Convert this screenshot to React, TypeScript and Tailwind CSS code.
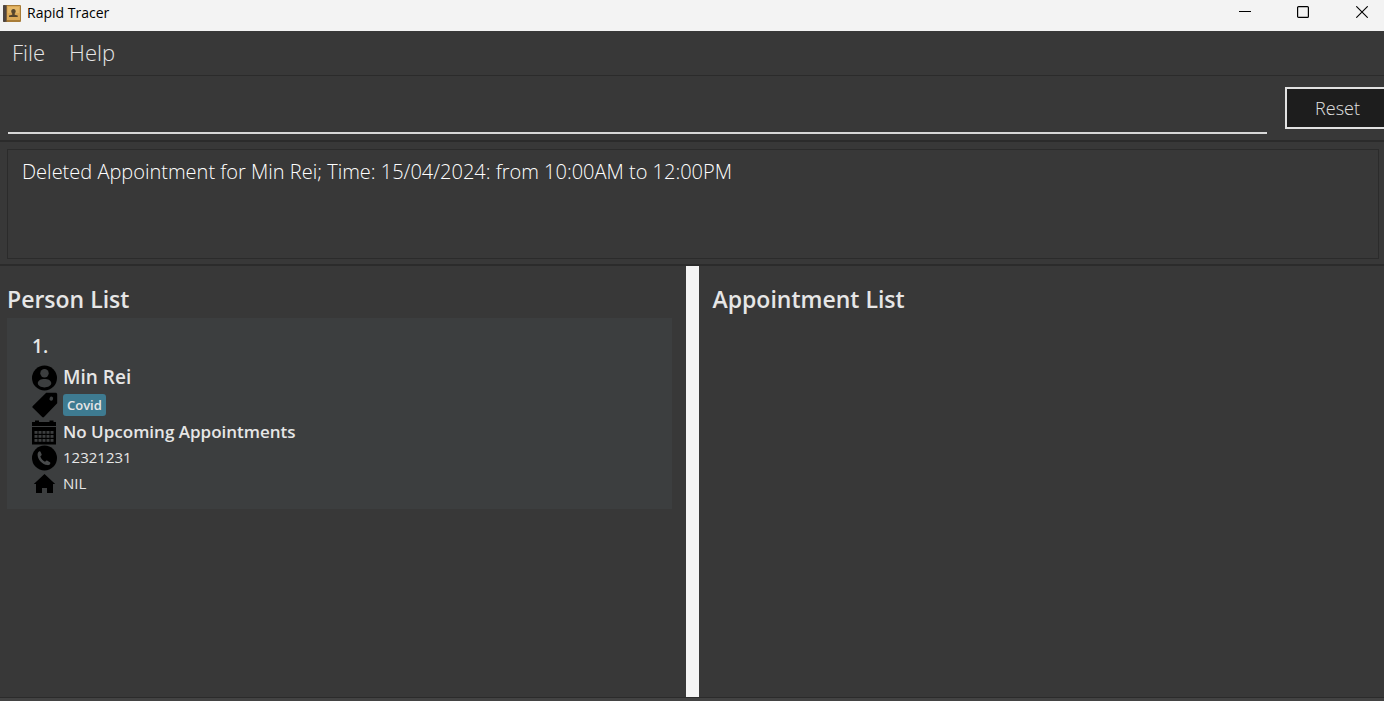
import type { ReactNode } from "react";

type Person = {
  name: string;
  tags: string[];
  appointments: string;
  phone: string;
  address: string;
};

const people: Person[] = [
  {
    name: "Min Rei",
    tags: ["Covid"],
    appointments: "No Upcoming Appointments",
    phone: "12321231",
    address: "NIL",
  },
];

function AppIcon() {
  return (
    <svg width="18" height="17" viewBox="0 0 18 17" aria-hidden="true">
      <rect x="0" y="0" width="18" height="17" rx="1" fill="#a87c38" />
      <rect x="4" y="1" width="13" height="14" fill="#dba957" />
      <rect x="5" y="2" width="11" height="6" fill="#e5b868" />
      <rect x="0" y="0" width="3" height="17" rx="1" fill="#4c4441" />
      <rect x="3" y="0" width="1" height="17" fill="#7d603b" />
      <path d="M10.500 4c1.500 0 2.200 1 2.200 2.300 0 1-.5 1.700-1 2.200v1.200l3 .9V12H6v-1.400l3.200-.9V8.500c-.6-.5-1-1.200-1-2.200C8.200 5 9 4 10.500 4z" fill="#57462d" />
    </svg>
  );
}

function UserIcon() {
  return (
    <svg width="26" height="26" viewBox="0 0 26 26" aria-hidden="true">
      <circle cx="12.500" cy="13" r="12.500" fill="#000" />
      <circle cx="12.500" cy="8.300" r="4.200" fill="#3c3e3f" />
      <path d="M5.800 18.300c0-2.900 3.200-4.300 6.700-4.300s6.800 1.400 6.800 4.300c0 2.300-3.500 4.200-6.800 4.200s-6.700-1.900-6.700-4.200z" fill="#3c3e3f" />
    </svg>
  );
}

function TagIcon() {
  return (
    <svg width="26" height="26" viewBox="0 0 26 26" aria-hidden="true">
      <path d="M14.200.7h9.300c1 0 1.700.7 1.700 1.700v8.800L12 25c-.6.600-1.200.6-1.800 0L.8 15.800c-.6-.6-.6-1.300 0-1.900z" fill="#000" />
      <ellipse cx="19.300" cy="6.700" rx="1.800" ry="2.100" transform="rotate(25 19.300 6.700)" fill="#3c3e3f" />
    </svg>
  );
}

function CalendarIcon() {
  const columns = [2.5, 6.5, 10.5, 14.5, 18.5];
  const rows = [12, 16, 20];
  return (
    <svg width="26" height="26" viewBox="0 0 26 26" aria-hidden="true">
      <path d="M0 3h3V1.500h4V3h10.500V1.500h4V3H24v4H0zM0 8h24v17.500H0z" fill="#000" />
      {rows.map((y) =>
        columns.map((x) => (
          <rect key={`${x}-${y}`} x={x} y={y} width="3" height="2.800" fill="#3c3e3f" />
        )),
      )}
    </svg>
  );
}

function PhoneIcon() {
  return (
    <svg width="26" height="26" viewBox="0 0 26 26" aria-hidden="true">
      <circle cx="12.500" cy="13" r="12.500" fill="#000" />
      <path d="M7.500 6.300c.4-.2.800 0 1 .5l1.100 2.400c.2.500.1.900-.3 1.200l-1 .9c.7 2.300 2.400 4.200 4.700 5.500l1.200-1c.4-.3.800-.3 1.200 0l2.500 1.400c.5.300.6.700.4 1.200-.4 1.200-1.500 1.900-2.900 1.700-5.200-.7-9.800-5.800-9.800-10.400 0-1.500.6-2.800 1.900-3.400z" fill="#484a4b" />
    </svg>
  );
}

function HomeIcon() {
  return (
    <svg width="26" height="26" viewBox="0 0 26 26" aria-hidden="true">
      <path d="M12.500 3L23.200 13H21v9h-6v-5h-5v5H4v-9H1.800z" fill="#000" />
    </svg>
  );
}

function Row({ icon, tall = false, children }: { icon: ReactNode; tall?: boolean; children: ReactNode }) {
  return (
    <div className={tall ? "flex h-[27px] items-center gap-[5px]" : "flex h-[26px] items-center gap-[5px]"}>
      {icon}
      {children}
    </div>
  );
}

function PersonCard({ person, index }: { person: Person; index: number }) {
  return (
    <li className="flex flex-col bg-[#3c3e3f] pt-4 pr-4 pb-3 pl-[25px] text-[#e6e6e6]">
      <span className="h-[30px] text-[19px] leading-6 font-semibold">{index}.</span>
      <Row tall icon={<UserIcon />}>
        <h3 className="text-[19px] font-semibold">{person.name}</h3>
      </Row>
      <Row tall icon={<TagIcon />}>
        {person.tags.map((tag) => (
          <span key={tag} className="rounded-[3px] bg-[#3e7b91] px-1 text-[13px] leading-[22px] font-semibold">
            {tag}
          </span>
        ))}
      </Row>
      <Row tall icon={<CalendarIcon />}>
        <span className="text-[17px] font-semibold">{person.appointments}</span>
      </Row>
      <Row icon={<PhoneIcon />}>
        <span className="pb-[2px] text-[15px] leading-6">{person.phone}</span>
      </Row>
      <Row icon={<HomeIcon />}>
        <span className="pb-[2px] text-[15px] leading-6">{person.address}</span>
      </Row>
    </li>
  );
}

function TitleBar() {
  return (
    <header className="flex h-[31px] shrink-0 items-start justify-between bg-[#f3f3f3] text-black">
      <div className="flex items-center gap-[6px] pt-1 pl-[3px]">
        <AppIcon />
        <h1 className="text-sm leading-[18px]">Rapid Tracer</h1>
      </div>
      <div className="flex h-6">
        <button type="button" aria-label="Minimize" className="flex w-[58px] items-center justify-center">
          <svg width="12" height="12" viewBox="0 0 12 12">
            <path d="M0 5.500h12" stroke="#000" />
          </svg>
        </button>
        <button type="button" aria-label="Maximize" className="flex w-[58px] items-center justify-center">
          <svg width="12" height="12" viewBox="0 0 12 12" fill="none">
            <rect x=".6" y=".6" width="10.800" height="10.800" rx="1" stroke="#000" strokeWidth="1.200" />
          </svg>
        </button>
        <button type="button" aria-label="Close" className="flex w-[52px] items-center justify-center pl-2">
          <svg width="12" height="12" viewBox="0 0 12 12">
            <path d="M.3.3l11.400 11.400M11.700.3L.3 11.700" stroke="#000" strokeWidth="1.100" />
          </svg>
        </button>
      </div>
    </header>
  );
}

export default function App() {
  return (
    <div className="flex h-screen flex-col overflow-hidden bg-[#383838] font-['Open_Sans','Noto_Sans',sans-serif]">
      <TitleBar />
      <nav className="flex h-[45px] shrink-0 items-center gap-6 border-b border-[#2b2b2b] pb-[2px] pl-3 text-[22px] font-light text-[#e6e6e6]">
        <button type="button">File</button>
        <button type="button">Help</button>
      </nav>

      <form
        className="flex h-[66px] shrink-0 items-center gap-[18px] border-b-2 border-[#2b2b2b] pl-2"
        onSubmit={(e) => e.preventDefault()}
      >
        <input
          type="text"
          aria-label="Command"
          className="h-[52px] min-w-0 flex-1 border-b-2 border-[#d8d8d8] bg-transparent px-2 text-xl font-light text-white outline-none"
        />
        <button
          type="reset"
          className="h-[42px] border-2 border-r-0 border-[#e2e2e2] bg-[#1d1d1d] pr-6 pl-7 text-lg font-light text-[#e0e0e0]"
        >
          Reset
        </button>
      </form>

      <section className="flex h-[124px] shrink-0 border-b-2 border-[#2b2b2b] pt-[7px] pr-[5px] pb-[5px] pl-[7px]">
        <p role="status" className="flex-1 border border-[#2b2b2b] px-[14px] pt-2 text-xl leading-7 font-light text-white">
          Deleted Appointment for Min Rei; Time: 15/04/2024: from 10:00AM to 12:00PM
        </p>
      </section>

      <main className="grid min-h-0 flex-1 grid-cols-[1fr_13px_1fr] border-b border-[#2b2b2b]">
        <section className="min-w-0 pt-[17px] pr-[14px] pl-[7px]">
          <h2 className="mb-[3px] text-[23px] leading-8 font-semibold text-[#e6e6e6]">Person List</h2>
          <ul>
            {people.map((person, i) => (
              <PersonCard key={person.name} person={person} index={i + 1} />
            ))}
          </ul>
        </section>
        <div role="separator" aria-orientation="vertical" className="bg-[#f4f4f4]" />
        <section className="min-w-0 pt-[17px] pr-4 pl-[14px]">
          <h2 className="text-[23px] leading-8 font-semibold text-[#e6e6e6]">Appointment List</h2>
        </section>
      </main>
      <footer className="h-[3px] shrink-0 bg-[#434343]" />
    </div>
  );
}
